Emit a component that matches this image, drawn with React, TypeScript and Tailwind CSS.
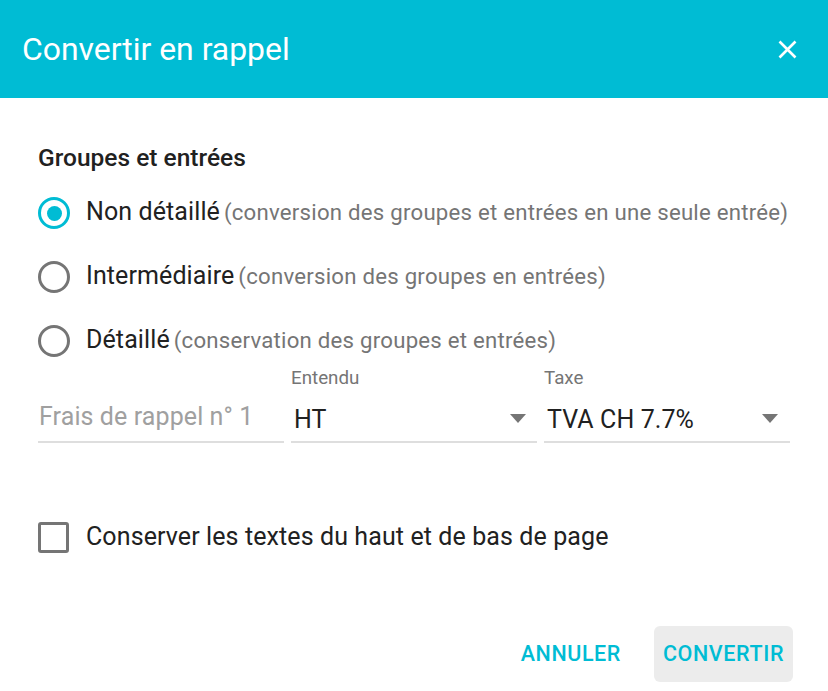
import React from "react";

function Radio({ checked }: { checked?: boolean }) {
  return (
    <div
      className={
        "flex h-[32px] w-[32px] shrink-0 items-center justify-center rounded-full border-[3px] " +
        (checked ? "border-[#00bcd4]" : "border-[#757575]")
      }
    >
      {checked && <div className="h-[15px] w-[15px] rounded-full bg-[#00bcd4]" />}
    </div>
  );
}

function Arrow() {
  return (
    <svg width="16" height="9" viewBox="0 0 16 9" className="shrink-0">
      <path d="M0 0 L16 0 L8 9 Z" fill="#757575" />
    </svg>
  );
}

export default function App() {
  const options = [
    { label: "Non détaillé", hint: "(conversion des groupes et entrées en une seule entrée)", checked: true },
    { label: "Intermédiaire", hint: "(conversion des groupes en entrées)" },
    { label: "Détaillé", hint: "(conservation des groupes et entrées)" },
  ];
  return (
    <div className="flex h-screen w-full flex-col bg-white font-['Roboto',sans-serif]">
      <div className="flex h-[98px] shrink-0 items-center justify-between bg-[#00bcd4] pl-[22px] pr-[31px]">
        <div className="text-[31.9px] leading-[40px] text-white">Convertir en rappel</div>
        <svg width="19" height="19" viewBox="0 0 19 19">
          <path d="M1.5 1.5 L17.5 17.5 M17.5 1.5 L1.5 17.5" stroke="white" strokeWidth="2.6" />
        </svg>
      </div>
      <div className="flex flex-col px-[38px]">
        <div className="mt-[45px] text-[24.5px] font-medium leading-[30px] text-[#212121]">
          Groupes et entrées
        </div>
        <div className="mt-[8px] flex flex-col">
          {options.map((o) => (
            <div key={o.label} className="flex h-[64px] items-center">
              <Radio checked={o.checked} />
              <div className="ml-[16px] whitespace-nowrap leading-[30px]">
                <span className="text-[25px] tracking-[0.1px] text-[#212121]">{o.label}</span>{" "}
                <span className="text-[22.2px] tracking-[0.24px] text-[#757575]">{o.hint}</span>
              </div>
            </div>
          ))}
        </div>
        <div className="-mt-[6px] flex gap-[7px]">
          <div className="flex w-[246px] flex-col">
            <div className="h-[22px]" />
            <div className="mt-[16px] flex h-[36px] items-start pl-[1px]">
              <span className="-mt-[3px] text-[25px] leading-[30px] tracking-[0.1px] text-[#a0a0a0]">Frais de rappel n° 1</span>
            </div>
            <div className="h-[2px] bg-[#dedede]" />
          </div>
          <div className="flex w-[246px] flex-col">
            <div className="text-[18.75px] leading-[22px] text-[#757575]">Entendu</div>
            <div className="mt-[16px] flex h-[36px] items-start justify-between pl-[3px] pr-[11px]">
              <span className="text-[25px] leading-[30px] tracking-[0.1px] text-[#212121]">HT</span>
              <div className="mt-[9px]">
                <Arrow />
              </div>
            </div>
            <div className="h-[2px] bg-[#dedede]" />
          </div>
          <div className="flex w-[246px] flex-col">
            <div className="text-[18.75px] leading-[22px] text-[#757575]">Taxe</div>
            <div className="mt-[16px] flex h-[36px] items-start justify-between pl-[3px] pr-[12px]">
              <span className="text-[25px] leading-[30px] tracking-[0.1px] text-[#212121]">TVA CH 7.7%</span>
              <div className="mt-[9px]">
                <Arrow />
              </div>
            </div>
            <div className="h-[2px] bg-[#dedede]" />
          </div>
        </div>
        <div className="mt-[78px] flex h-[32px] items-center">
          <div className="h-[31px] w-[31px] shrink-0 rounded-[3px] border-[3px] border-[#757575]" />
          <div className="ml-[17px] text-[25px] leading-[30px] tracking-[0.1px] text-[#212121]">
            Conserver les textes du haut et de bas de page
          </div>
        </div>
      </div>
      <div className="mt-[73px] flex justify-end gap-[23px] pr-[35px]">
        <div className="flex h-[56px] items-center px-[10px] text-[21.5px] font-medium tracking-[0.6px] text-[#00bcd4]">
          ANNULER
        </div>
        <div className="flex h-[56px] w-[139px] items-center justify-center rounded-[6px] bg-[#ececec] text-[21.5px] font-medium tracking-[0.6px] text-[#00bcd4]">
          CONVERTIR
        </div>
      </div>
    </div>
  );
}
